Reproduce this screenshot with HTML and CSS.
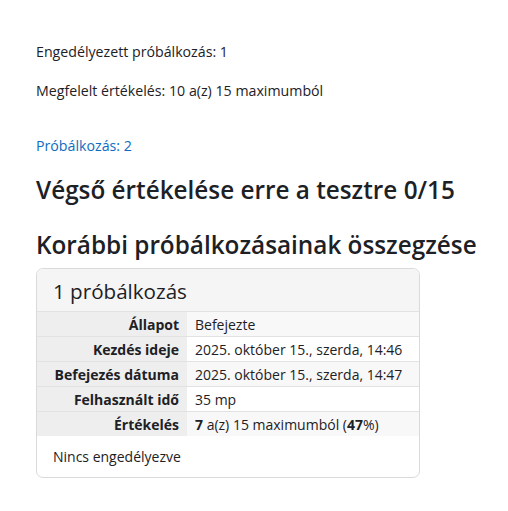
FILE: index.html
```html
<!DOCTYPE html>
<html lang="hu">
  <head>
    <meta charset="UTF-8" />
    <meta name="viewport" content="width=device-width, initial-scale=1.0" />
    <title>Teszt</title>
    <link rel="stylesheet" href="styles.css">
  </head>
  <body>
    <div class="quiz-page">
      <div class="quiz-info">
        <p>Engedélyezett próbálkozás: 1</p>
        <p>Megfelelt értékelés: 10 a(z) 15 maximumból</p>
      </div>

      <p class="attempt-link"><a href="#">Próbálkozás: 2</a></p>

      <h3 class="final-grade">Végső értékelése erre a tesztre 0/15</h3>

      <h3 class="summary-title">Korábbi próbálkozásainak összegzése</h3>

      <div class="attempt-card">
        <h4 class="card-header">1 próbálkozás</h4>
        <table class="attempt-table">
          <tr class="odd">
            <th>Állapot</th>
            <td>Befejezte</td>
          </tr>
          <tr>
            <th>Kezdés ideje</th>
            <td>2025. október 15., szerda, 14:46</td>
          </tr>
          <tr class="odd">
            <th>Befejezés dátuma</th>
            <td>2025. október 15., szerda, 14:47</td>
          </tr>
          <tr>
            <th>Felhasznált idő</th>
            <td>35 mp</td>
          </tr>
          <tr class="odd">
            <th>Értékelés</th>
            <td><b>7</b> a(z) 15 maximumból (<b>47</b>%)</td>
          </tr>
        </table>
        <div class="card-footer">Nincs engedélyezve</div>
      </div>
    </div>
  </body>
</html>
```

FILE: styles.css
```css
body {
  margin: 0;
  font-family: "Open Sans", "Liberation Sans", sans-serif;
  font-size: 14.2px;
  line-height: 21px;
  color: #1d2125;
  background: white;
}
.quiz-page {
  padding: 41px 12px 30px 36px;
}
.quiz-info p {
  margin: 0 0 18px;
}
.attempt-link {
  margin: 34px 0 0;
}
.attempt-link a {
  color: #0f6cbf;
  text-decoration: none;
}
h3 {
  font-size: 24.3px;
  line-height: 28px;
  font-weight: 600;
  margin: 0;
  white-space: nowrap;
}
.final-grade {
  margin-top: 20px;
}
.summary-title {
  margin-top: 27px;
}
.attempt-card {
  width: 382px;
  margin-top: 9px;
  border: 1px solid #dadada;
  border-radius: 7px;
  overflow: hidden;
}
.card-header {
  margin: 0;
  padding: 0 16px;
  height: 42px;
  line-height: 44px;
  font-size: 20.6px;
  font-weight: 500;
  background: #f5f5f5;
  border-bottom: 1px solid #e2e2e2;
}
.attempt-table {
  width: 100%;
  border-collapse: collapse;
  font-size: 14px;
}
.attempt-table th,
.attempt-table td {
  height: 24px;
  padding: 0 8px;
  border-bottom: 1px solid #e2e2e2;
}
.attempt-table tr:last-child th,
.attempt-table tr:last-child td {
  border-bottom: none;
}
.attempt-table th {
  width: 134px;
  text-align: right;
  font-weight: bold;
  background: #eeeeee;
}
.attempt-table td {
  text-align: left;
}
.attempt-table tr.odd td {
  background: #f8f8f8;
}
.card-footer {
  padding: 10px 16px;
  height: 21px;
  font-size: 14px;
}
```
